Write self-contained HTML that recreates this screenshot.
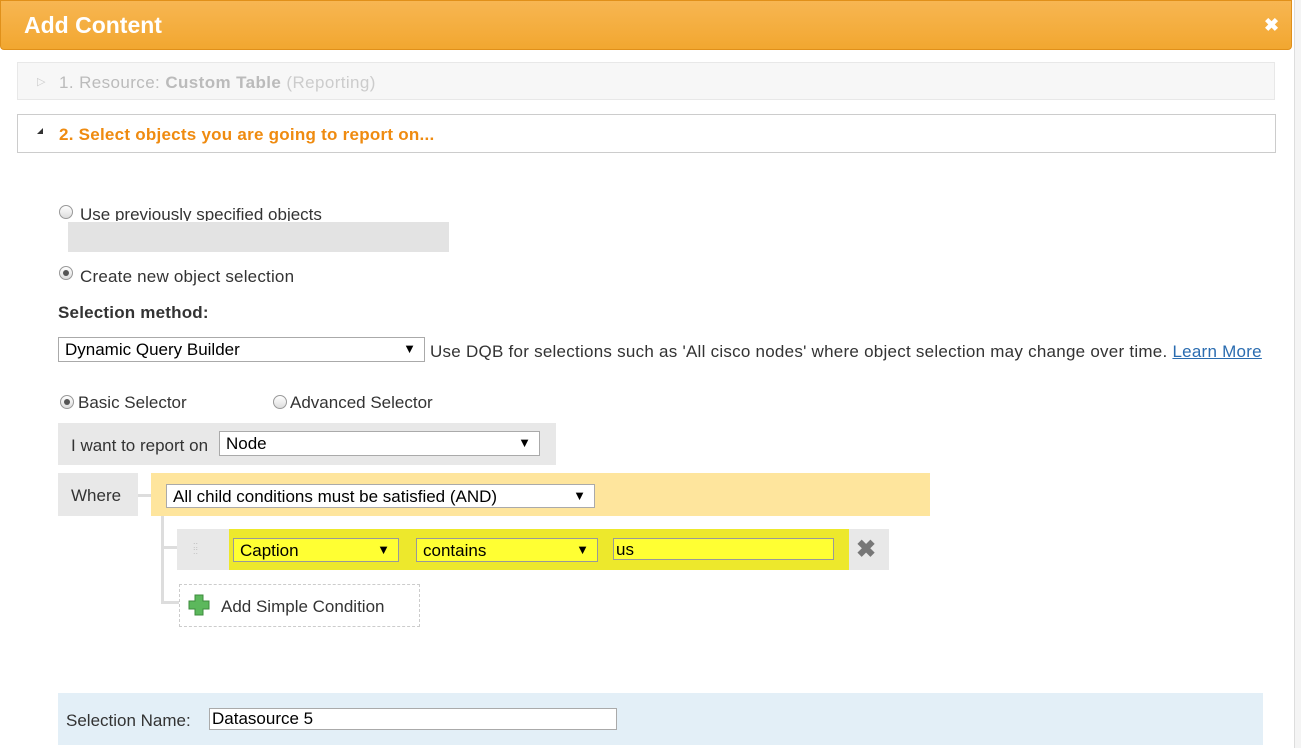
<!DOCTYPE html>
<html><head><meta charset="utf-8"><style>
*{box-sizing:border-box}
body{margin:0;width:1301px;height:748px;overflow:hidden;background:#fff;font-family:"Liberation Sans",Arial,sans-serif;font-size:17px;color:#333;position:relative}
.a{position:absolute}
.sel{position:absolute;border:1px solid #aaa;background:#fff;color:#000;font-size:17px;padding:3px 6px;line-height:18px}
.sel:after{content:"▼";position:absolute;right:8px;top:2px;font-size:13px}
.radio{position:absolute;width:14px;height:14px;border-radius:50%;border:1px solid #999;background:linear-gradient(#fff,#ddd)}
.radio.on:after{content:"";position:absolute;left:3px;top:3px;width:6px;height:6px;border-radius:50%;background:#555}
</style></head><body>
<div class="a" style="left:0;top:0;width:1292px;height:50px;background:linear-gradient(#f7b652,#f2a730);border:1px solid #e0901a;border-radius:0 0 4px 4px"></div>
<div class="a" style="left:24px;top:12px;color:#fff;font-weight:bold;font-size:23px">Add Content</div>
<div class="a" style="left:1264px;top:15px;color:#fff;font-weight:bold;font-size:18px">✖</div>
<div class="a" style="left:1294px;top:0;width:7px;height:748px;background:#f4f4f4;border-left:1px solid #ddd"></div>
<div class="a" style="left:17px;top:62px;width:1258px;height:38px;background:#f7f7f7;border:1px solid #e8e8e8"></div>
<div class="a" style="left:37px;top:75px;color:#ccc;font-size:11px">▷</div>
<div class="a" style="left:59px;top:73px;color:#bbb;letter-spacing:0.4px">1. Resource: <b>Custom Table</b> <span style="color:#ccc">(Reporting)</span></div>
<div class="a" style="left:17px;top:114px;width:1259px;height:39px;background:#fff;border:1px solid #ccc"></div>
<div class="a" style="left:37px;top:128px;width:0;height:0;border-left:6px solid transparent;border-bottom:6px solid #333"></div>
<div class="a" style="left:59px;top:125px;color:#ef8b10;font-weight:bold;letter-spacing:0.25px">2. Select objects you are going to report on...</div>
<div class="radio" style="left:59px;top:205px"></div>
<div class="a" style="left:80px;top:205px;height:16px;overflow:hidden">Use previously specified objects</div>
<div class="a" style="left:68px;top:222px;width:381px;height:30px;background:#e3e3e3"></div>
<div class="radio on" style="left:59px;top:266px"></div>
<div class="a" style="left:80px;top:267px;letter-spacing:0.2px">Create new object selection</div>
<div class="a" style="left:58px;top:303px;font-weight:bold;letter-spacing:0.2px">Selection method:</div>
<div class="sel" style="left:58px;top:337px;width:367px;height:25px">Dynamic Query Builder</div>
<div class="a" style="left:430px;top:342px;letter-spacing:0.25px">Use DQB for selections such as 'All cisco nodes' where object selection may change over time. <span style="color:#2a6cb0;text-decoration:underline">Learn More</span></div>
<div class="radio on" style="left:60px;top:395px"></div>
<div class="a" style="left:78px;top:393px">Basic Selector</div>
<div class="radio" style="left:273px;top:395px"></div>
<div class="a" style="left:290px;top:393px">Advanced Selector</div>
<div class="a" style="left:58px;top:423px;width:498px;height:42px;background:#e8e8e8"></div>
<div class="a" style="left:71px;top:436px">I want to report on</div>
<div class="sel" style="left:219px;top:431px;width:321px;height:25px">Node</div>
<div class="a" style="left:58px;top:473px;width:80px;height:43px;background:#e8e8e8"></div>
<div class="a" style="left:71px;top:486px">Where</div>
<div class="a" style="left:138px;top:494px;width:13px;height:3px;background:#ddd"></div>
<div class="a" style="left:151px;top:473px;width:779px;height:43px;background:#fee59d"></div>
<div class="sel" style="left:166px;top:484px;width:429px;height:24px">All child conditions must be satisfied (AND)</div>
<div class="a" style="left:161px;top:516px;width:3px;height:88px;background:#ddd"></div>
<div class="a" style="left:161px;top:546px;width:16px;height:3px;background:#ddd"></div>
<div class="a" style="left:161px;top:601px;width:18px;height:3px;background:#ddd"></div>
<div class="a" style="left:177px;top:529px;width:712px;height:41px;background:#e8e8e8"></div>
<div class="a" style="left:193px;top:542px;color:#bbb;font-size:9px;line-height:6px">::<br>::</div>
<div class="a" style="left:229px;top:529px;width:620px;height:41px;background:#ede82c"></div>
<div class="sel" style="left:233px;top:538px;width:166px;height:24px;background:#ffff33;border-color:#999">Caption</div>
<div class="sel" style="left:416px;top:538px;width:182px;height:24px;background:#ffff33;border-color:#999">contains</div>
<div class="a" style="left:613px;top:538px;width:221px;height:22px;background:#ffff33;border:1px solid #999;padding:2px 2px;color:#000;line-height:18px">us</div>
<div class="a" style="left:856px;top:535px;color:#777;font-size:24px;font-weight:bold">✖</div>
<div class="a" style="left:179px;top:584px;width:241px;height:43px;border:1px dashed #ccc;background:#fff"></div>
<svg class="a" style="left:188px;top:594px" width="22" height="22" viewBox="0 0 22 22"><path d="M7 1h8v6h6v8h-6v6H7v-6H1V7h6z" fill="#5cb85c" stroke="#3d8b3d"/></svg>
<div class="a" style="left:221px;top:597px">Add Simple Condition</div>
<div class="a" style="left:58px;top:693px;width:1205px;height:52px;background:#e3eff7"></div>
<div class="a" style="left:66px;top:711px">Selection Name:</div>
<div class="a" style="left:209px;top:708px;width:408px;height:22px;background:#fff;border:1px solid #aaa;padding:1px 2px;color:#000;line-height:18px">Datasource 5</div>
</body></html>
